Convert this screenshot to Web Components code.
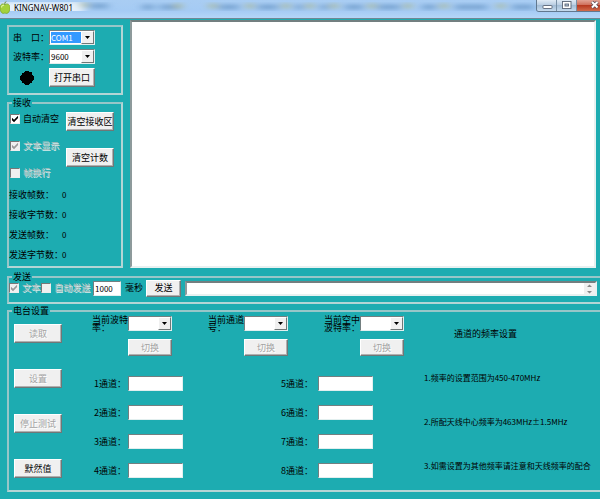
<!DOCTYPE html>
<html lang="zh-CN">
<head>
<meta charset="utf-8">
<title>KINGNAV-W801</title>
<style>
  html, body { margin: 0; height: 100%; }
  body { background: #1dacb1; overflow: hidden; font: 9px/10px "Noto Sans CJK SC", "Liberation Sans", sans-serif; color: #000; }
</style>
</head>
<body>
<nav-app></nav-app>
<script>
const define = (name, html, setup) => {
  const t = document.createElement('template');
  t.innerHTML = '<style>*,*::before,*::after{box-sizing:border-box}</style>' + html;
  customElements.define(name, class extends HTMLElement {
    constructor() {
      super();
      this.attachShadow({ mode: 'open' }).append(t.content.cloneNode(true));
    }
    connectedCallback() { if (setup) setup(this, this.shadowRoot); }
  });
};

define('ui-titlebar', `
<style>
  :host { display: flex; align-items: flex-start; height: 19px; border-bottom: 1px solid #6f8894; overflow: hidden; position: relative;
    background: linear-gradient(#a9cdf3, #a5cbf4 60%, #b4d6f8); }
  .glass { position: absolute; inset: 0; width: 100%; height: 100%; }
  .logo { width: 10px; height: 14px; position: relative; flex: none; }
  h1 { margin: 0 0 0 4px; font: 8px/16px "Noto Sans", "Open Sans", sans-serif; flex: 1; position: relative; white-space: nowrap; }
  .caption { display: flex; margin-right: -12px; position: relative; border: 1px solid #61788f; border-top: 0; border-radius: 0 0 3px 3px; overflow: hidden; }
  button { display: block; border: 0; border-right: 1px solid #7890a6; padding: 0; width: 20px; height: 11px; background: linear-gradient(#dfeaf5, #b9cde2 45%, #a3bdd6 50%, #c6dbef); }
  button svg { display: block; width: 20px; height: 11px; }
  button.close { width: 34px; border: 0; background: linear-gradient(#e2a496, #cf6f5b 45%, #b73a21 50%, #d16b4c); }
  button.close svg { width: 34px; }
</style>
<svg class="glass" viewBox="0 0 600 18" preserveAspectRatio="none" aria-hidden="true">
  <defs><filter id="b" x="-10%" y="-100%" width="120%" height="300%"><feGaussianBlur stdDeviation="4 2"/></filter></defs>
  <g filter="url(#b)">
    <path d="M0 8h84" stroke="#e6f1fb" stroke-width="13"/>
    <path d="M90 6h18M142 7h12M160 7h20M219 7h20M258 7h20M295 7h8M320 7h8M345 7h18M378 7h22M422 7h14M455 7h32M512 7h22" stroke="#6f9ccb" stroke-width="4"/>
    <path d="M80 5h8M174 6h8M209 6h8M246 6h8M282 6h8M306 6h8M330 6h8M368 6h8M404 6h8M440 6h8M497 6h8" stroke="#a9b795" stroke-width="4"/>
  </g>
</svg>
<svg class="logo" viewBox="0 0 10 14" aria-hidden="true">
  <path d="M4.500 4.500C2.500 3 0 4.300 0 8c0 3 1.800 5.500 3.300 5.500.8 0 1-.4 1.600-.4s1 .4 1.800.4C8.500 13.500 10 10.500 10 8c0-3.700-2.700-5-4.600-3.500z" fill="#a3d13c" stroke="#6d9a1c" stroke-width=".6"/>
  <path d="M4.800 4.500C4.700 3 5.200 2 6.300 1.500" stroke="#5b7c1c" fill="none"/>
  <path d="M1.500 7.500c.2-1.800 1.200-2.500 2.600-2.200" stroke="#e1f4a5" fill="none" stroke-width="1.200"/>
</svg>
<h1>KINGNAV-W801</h1>
<div class="caption">
  <button aria-label="最小化"><svg viewBox="0 0 20 11"><rect x="6" y="5.500" width="9" height="3" rx=".5" fill="#fff" stroke="#5a6577" stroke-width=".9"/></svg></button>
  <button aria-label="最大化"><svg viewBox="0 0 20 11"><rect x="5.500" y="1.500" width="8.500" height="7" fill="#fff" stroke="#5a6577" stroke-width=".9"/><rect x="8" y="4" width="3.500" height="2" fill="#b7cbe0" stroke="#5a6577" stroke-width=".9"/></svg></button>
  <button class="close" aria-label="关闭"><svg viewBox="0 0 34 11"><path d="M15 2l5.500 5.500M20.500 2L15 7.500" stroke="#5a4a55" stroke-width="3.400"/><path d="M15 2l5.500 5.500M20.500 2L15 7.500" stroke="#fff" stroke-width="2"/></svg></button>
</div>`);

define('ui-group', `
<style>
  :host { display: block; }
  fieldset { margin: 0; padding: 0; min-width: 0; height: 100%; border: 2px solid; border-color: #97c6c8 #b3d5d5 #b3d5d5 #97c6c8; }
  legend { height: 2px; line-height: 2px; padding: 0 1px; margin-left: 3px; white-space: nowrap; }
  legend[hidden] { display: none; }
</style>
<fieldset><legend></legend><slot></slot></fieldset>`,
(h, r) => {
  const l = r.querySelector('legend'), t = h.getAttribute('legend');
  l.textContent = t || ''; l.hidden = !t;
});

define('ui-button', `
<style>
  :host { display: block; height: 19px; }
  button { width: 100%; height: 100%; display: block; padding: 0; font: inherit; white-space: nowrap; color: #000; background: #f0f0f0;
    border: 1px solid; border-color: #fff #6f7777 #6f7777 #fff; box-shadow: inset -1px -1px #b0b0b0; }
  button:disabled { color: #a3a3a3; text-shadow: 1px 1px #fff; }
</style>
<button><slot></slot></button>`,
(h, r) => { r.querySelector('button').disabled = h.hasAttribute('disabled'); });

define('ui-check', `
<style>
  :host { display: block; }
  label { display: flex; align-items: center; gap: 3px; white-space: nowrap; }
  input { appearance: none; margin: 0; width: 10px; height: 10px; flex: none; background: #fff; display: block; border: 1px solid; border-color: #777 #eee #eee #777; }
  input:checked::before { content: ""; display: block; width: 8px; height: 8px; background: #000; clip-path: polygon(12% 35%, 38% 58%, 88% 8%, 88% 38%, 38% 90%, 12% 65%); }
  input:disabled { background: #f0f0f0; }
  input:disabled:checked::before { background: #999; }
  label.off { color: #a9bcbc; text-shadow: 1px 1px #dcebea; }
</style>
<label><input type="checkbox"><span><slot></slot></span></label>`,
(h, r) => {
  const i = r.querySelector('input');
  i.checked = h.hasAttribute('checked');
  i.disabled = h.hasAttribute('disabled');
  r.querySelector('label').classList.toggle('off', i.disabled);
});

define('ui-select', `
<style>
  :host { display: block; }
  .row { display: grid; grid-template-columns: var(--label, 36px) 1fr; align-items: var(--align, center); }
  label { line-height: 8px; }
  .box { position: relative; display: block; height: 15px; border: 1px solid; border-color: #737f80 #e2efef #e2efef #737f80; background: #fff; }
  select { appearance: none; display: block; width: 100%; height: 100%; margin: 0; border: 1px solid #fff; border-right: 13px solid #fff; border-radius: 0; padding: 0; background: #fff;
    font: 8px/10px "Noto Sans CJK SC", sans-serif; color: #000; }
  select.on { background: #3399ff; color: #fff; }
  .arrow { position: absolute; right: 0; top: 0; bottom: 0; width: 13px; background: #f0f0f0; border: 1px solid; border-color: #fff #6f7777 #6f7777 #fff; display: grid; place-items: center; pointer-events: none; }
  svg { display: block; width: 5px; height: 3px; }
</style>
<div class="row"><label for="s"><slot></slot></label>
<span class="box"><select id="s"><option></option></select><span class="arrow"><svg viewBox="0 0 5 3"><path d="M0 0h5L2.500 3z"/></svg></span></span></div>`,
(h, r) => {
  r.querySelector('option').textContent = h.getAttribute('value') || '';
  r.querySelector('select').classList.toggle('on', h.hasAttribute('active'));
});

define('ui-input', `
<style>
  :host { display: block; }
  .row { display: grid; grid-template-columns: 1fr 55px; align-items: center; }
  :host([after]) .row { grid-template-columns: 28px auto; gap: 4px; }
  :host([after]) label { order: 2; }
  label { white-space: nowrap; }
  input { display: block; width: 100%; height: 15px; margin: 0; padding: 0 1px; border: 1px solid; border-color: #737f80 #e2efef #e2efef #737f80; border-radius: 0; background: #fff;
    font: 8px/10px "Noto Sans CJK SC", sans-serif; color: #000; }
</style>
<div class="row"><label for="i"><slot></slot></label><input id="i" type="text"></div>`,
(h, r) => { r.querySelector('input').value = h.getAttribute('value') || ''; });

define('ui-memo', `
<style>
  :host { display: flex; background: #fff; border: 2px solid; border-color: #737f80 #e8f1f1 #e8f1f1 #8d9a9b; min-width: 0; }
  textarea { flex: 1; min-width: 0; border: 0; margin: 0; padding: 1px; resize: none; background: #fff; outline: 0; font: inherit; overflow: hidden; }
  .bar { display: none; width: 11px; background: #f0f0f0; }
  :host([scroll]) .bar { display: block; }
  svg { display: block; width: 11px; height: 11px; }
</style>
<textarea></textarea><div class="bar"><svg viewBox="0 0 11 11"><path d="M3 4h5L5.500 1.500zM3 8h5L5.500 10.500z" fill="#888"/></svg></div>`,
(h, r) => { r.querySelector('textarea').setAttribute('aria-label', h.getAttribute('name')); });

define('port-panel', `
<style>
  :host { display: block; }
  .in { padding: 3px 26px 6px 4px; display: grid; gap: 4px; }
  .open { display: grid; grid-template-columns: 36px 1fr; align-items: center; }
  .lamp { width: 14px; height: 14px; margin-left: 7px; display: block; }
</style>
<ui-group><div class="in">
  <ui-select value="COM1" active>串　口：</ui-select>
  <ui-select value="9600">波特率：</ui-select>
  <div class="open"><svg class="lamp" viewBox="0 0 14 14"><path d="M5 0h4v1h3v3h1v1h1v4h-1v1h-1v2h-2v1H9v1H5v-1H4v-1H2v-2H1V9H0V5h1V4h1V2h2V1h1z"/></svg><ui-button>打开串口</ui-button></div>
</div></ui-group>`);

define('receive-panel', `
<style>
  :host { display: block; }
  .top { display: grid; grid-template-columns: 1fr 48px; padding: 8px 7px 0 1px; height: 81px; align-items: start; }
  .checks { display: grid; gap: 17px; padding-top: 2px; }
  .btns { display: grid; gap: 17px; }
  dl { margin: 0; padding-bottom: 1px; display: grid; grid-template-columns: 53px 1fr; grid-auto-rows: 20px; align-items: center; white-space: nowrap; }
  dd { margin: 0; font-size: 8px; }
</style>
<ui-group legend="接收">
  <div class="top">
    <div class="checks"><ui-check checked>自动清空</ui-check><ui-check checked disabled>文本显示</ui-check><ui-check disabled>帧换行</ui-check></div>
    <div class="btns"><ui-button>清空接收区</ui-button><ui-button>清空计数</ui-button></div>
  </div>
  <dl><dt>接收帧数：</dt><dd>0</dd><dt>接收字节数：</dt><dd>0</dd><dt>发送帧数：</dt><dd>0</dd><dt>发送字节数：</dt><dd>0</dd></dl>
</ui-group>`);

define('send-panel', `
<style>
  :host { display: block; }
  .row { display: flex; align-items: center; height: 20px; margin-bottom: 4px; padding-right: 7px; }
  .auto { margin: 0 3px 0 1px; }
  ui-button { width: 35px; height: 17px; margin: 0 4px 0 3px; flex: none; }
  ui-memo { flex: 1; height: 15px; }
  ui-check, ui-input { flex: none; }
</style>
<ui-group legend="发送"><div class="row">
  <ui-check checked disabled>文本</ui-check><ui-check class="auto" disabled>自动发送</ui-check>
  <ui-input after value="1000">毫秒</ui-input><ui-button>发送</ui-button><ui-memo name="发送内容" scroll></ui-memo>
</div></ui-group>`);

define('radio-panel', `
<style>
  :host { display: block; }
  .grid { display: grid; grid-template-columns: 48px 315px 1fr; column-gap: 30px; padding: 4px 0 12px 5px; }
  .acts { display: grid; gap: 26px; align-content: start; padding-top: 8px; }
  .combos { display: flex; gap: 36px; }
  .combo { width: 80px; --align: start; }
  .combo ui-button { margin: 5px 0 0 36px; height: 17px; }
  .combo ui-select { height: 18px; }
  .chans { display: grid; grid-template-columns: 89px 92px; column-gap: 98px; row-gap: 14px; padding: 20px 0 0 2px; }
  .notes { white-space: nowrap; font-size: 8px; margin-left: -14px; }
  h2 { margin: 13px 0 0 31px; font: inherit; font-size: 9px; }
  ol { list-style: none; margin: 0; padding: 34px 0 0 1px; display: grid; gap: 34px; }
</style>
<ui-group legend="电台设置"><div class="grid">
  <div class="acts"><ui-button disabled>读取</ui-button><ui-button disabled>设置</ui-button><ui-button disabled>停止测试</ui-button><ui-button>默然值</ui-button></div>
  <div>
    <div class="combos">
      <div class="combo"><ui-select>当前波特率：</ui-select><ui-button disabled>切换</ui-button></div>
      <div class="combo"><ui-select>当前通道号：</ui-select><ui-button disabled>切换</ui-button></div>
      <div class="combo"><ui-select>当前空中波特率：</ui-select><ui-button disabled>切换</ui-button></div>
    </div>
    <div class="chans">
      <ui-input>1通道：</ui-input><ui-input>5通道：</ui-input>
      <ui-input>2通道：</ui-input><ui-input>6通道：</ui-input>
      <ui-input>3通道：</ui-input><ui-input>7通道：</ui-input>
      <ui-input>4通道：</ui-input><ui-input>8通道：</ui-input>
    </div>
  </div>
  <div class="notes"><h2>通道的频率设置</h2>
    <ol><li>1.频率的设置范围为450-470MHz</li><li>2.所配天线中心频率为463MHz±1.5MHz</li><li>3.如需设置为其他频率请注意和天线频率的配合</li></ol></div>
</div></ui-group>`);

define('nav-app', `
<style>
  :host { display: block; overflow: hidden; }
  main { padding: 1px 0 0 7px; }
  .upper { display: grid; grid-template-columns: 116px 1fr; column-gap: 7px; padding-right: 4px; }
  .side { padding-top: 5px; display: grid; gap: 7px; }
  .wide { display: grid; gap: 6px; margin: 8px -6px 0 0; }
</style>
<ui-titlebar></ui-titlebar>
<main>
  <div class="upper">
    <div class="side"><port-panel></port-panel><receive-panel></receive-panel></div>
    <ui-memo name="接收内容"></ui-memo>
  </div>
  <div class="wide"><send-panel></send-panel><radio-panel></radio-panel></div>
</main>`);
</script>
</body>
</html>
